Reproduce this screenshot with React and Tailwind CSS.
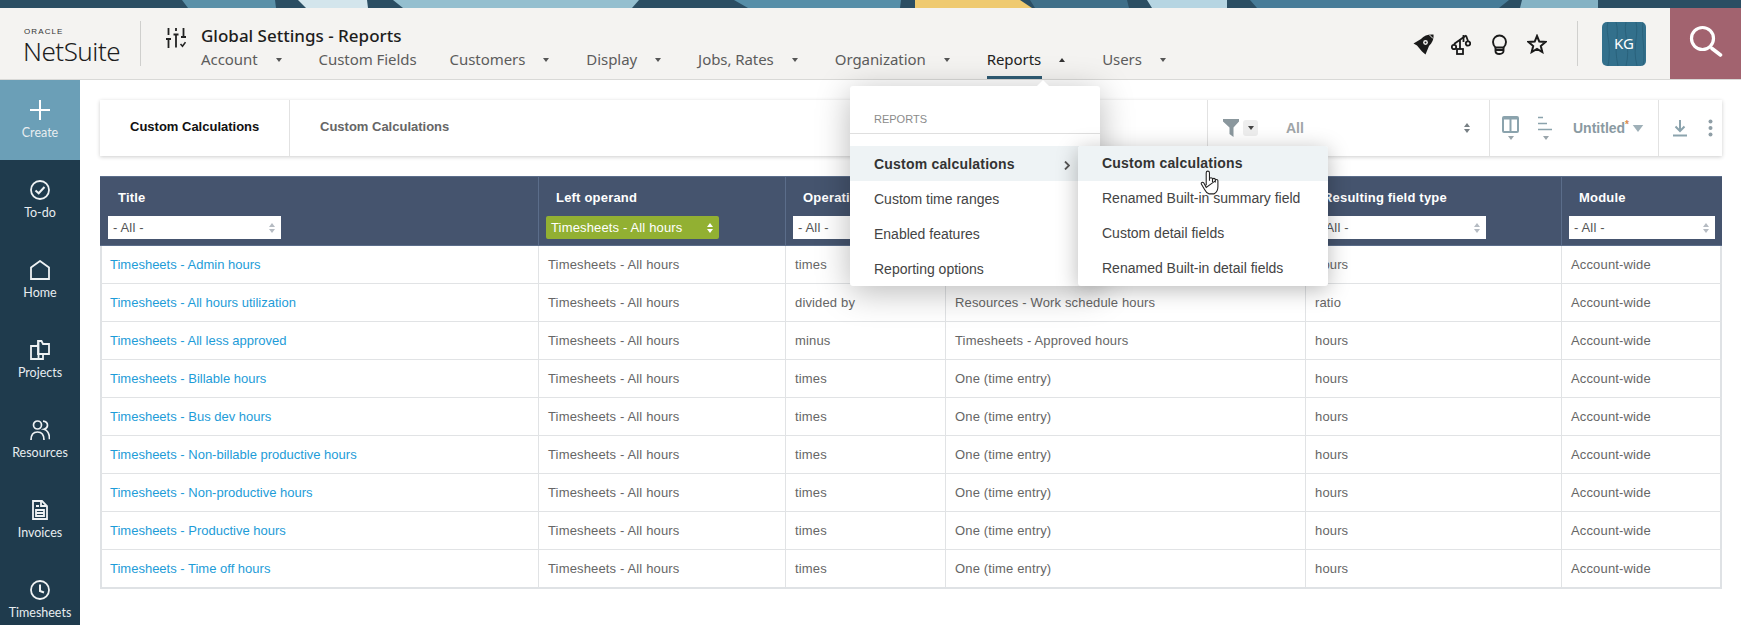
const navItems = [
  { label: "Account", caret: true },
  { label: "Custom Fields" },
  { label: "Customers", caret: true },
  { label: "Display", caret: true },
  { label: "Jobs, Rates", caret: true },
  { label: "Organization", caret: true },
  { label: "Reports", caret: true, active: true },
  { label: "Users", caret: true },
];

const rows = [
  ["Timesheets - Admin hours", "times", "Timesheets - Admin hours", "hours"],
  ["Timesheets - All hours utilization", "divided by", "Resources - Work schedule hours", "ratio"],
  ["Timesheets - All less approved", "minus", "Timesheets - Approved hours", "hours"],
  ["Timesheets - Billable hours", "times", "One (time entry)", "hours"],
  ["Timesheets - Bus dev hours", "times", "One (time entry)", "hours"],
  ["Timesheets - Non-billable productive hours", "times", "One (time entry)", "hours"],
  ["Timesheets - Non-productive hours", "times", "One (time entry)", "hours"],
  ["Timesheets - Productive hours", "times", "One (time entry)", "hours"],
  ["Timesheets - Time off hours", "times", "One (time entry)", "hours"],
];

const gridCols = "grid grid-cols-[438px_247px_160px_360px_256px_161px]";

function TopBand() {
  return (
    <svg className="block h-2 w-full shrink-0" viewBox="0 0 1741 8" preserveAspectRatio="none">
      <rect width="1741" height="8" fill="#2b4e63" />
      <polygon points="182,0 275,0 276,8 188,8" fill="#5a90a8" />
      <polygon points="298,0 367,0 368,8 306,8" fill="#d3e5ec" />
      <polygon points="393,0 639,0 632,8 403,8" fill="#94bfcf" />
      <polygon points="734,0 901,0 900,8 748,8" fill="#568ea8" />
      <polygon points="915,0 1020,0 1032,8 915,8" fill="#efca70" />
      <polygon points="1030,0 1127,0 1129,8 1035,8" fill="#3f6f89" />
      <polygon points="1147,0 1227,0 1227,8 1152,8" fill="#b6d5e2" />
      <polygon points="1250,0 1509,0 1499,8 1257,8" fill="#477c98" />
      <polygon points="1522,0 1598,0 1598,8 1520,8" fill="#84b2c4" />
    </svg>
  );
}

function Caret({ up, className = "" }) {
  return (
    <svg className={className} width="6" height="4" viewBox="0 0 6 4">
      <polygon points={up ? "0,4 6,4 3,0" : "0,0 6,0 3,4"} fill="currentColor" />
    </svg>
  );
}

function SettingsIcon() {
  return (
    <svg width="20" height="20" viewBox="0 0 20 20" fill="none" stroke="#222" strokeWidth="1.8">
      <path d="M2.5 0v7M0 11h5M2.5 11v9" />
      <path d="M10 0v3M7.5 6.5h5M10 6.5v13" />
      <path d="M17.5 0v9M15 9h5" />
      <path d="M14.5 16l2 2.2 3-4" strokeWidth="1.6" />
    </svg>
  );
}

function RocketIcon() {
  return (
    <svg width="21" height="21" viewBox="0 0 21 21">
      <path d="M20.5.5c-5-.4-9.500 1-12.500 4.500L.5 9.500l3.500 2 5 6 3.500 3 3.500-8.500c3-3 5-6.500 4.500-11.500z" fill="#1a1a1a" />
      <circle cx="12.500" cy="8.500" r="2.400" fill="#f4f3f1" />
      <circle cx="12.500" cy="8.500" r="1" fill="#1a1a1a" />
      <path d="M16.500 1l3.500 3.500" stroke="#f4f3f1" strokeWidth="1" />
    </svg>
  );
}

function ScalesIcon() {
  return (
    <svg width="20" height="21" viewBox="0 0 20 21" fill="none" stroke="#1a1a1a" strokeWidth="1.800">
      <path d="M9 15V5M3 10L15 1.500" />
      <circle cx="3" cy="13" r="2.200" />
      <circle cx="17" cy="9.500" r="2.200" />
      <path d="M3 10.500v-.5M15 1.500l2 5.500M12.500 1v7" />
      <rect x="6" y="15" width="6" height="5" />
    </svg>
  );
}

function BulbIcon() {
  return (
    <svg width="15" height="21" viewBox="0 0 15 21" fill="none" stroke="#1a1a1a" strokeWidth="1.900">
      <path d="M3.500 13.500C2 12 1 10.500 1 8a6.500 6.500 0 0 1 13 0c0 2.500-1 4-2.500 5.500z" />
      <path d="M3.500 13.500v3.500c0 1.500 1.500 3 4 3s4-1.500 4-3v-3.500M3.500 16h8" />
    </svg>
  );
}

function StarIcon() {
  return (
    <svg width="20" height="20" viewBox="0 0 20 20" fill="none" stroke="#1a1a1a" strokeWidth="2">
      <polygon points="10,2 12.300,7.600 18.500,8 13.800,12 15.300,18 10,14.800 4.700,18 6.200,12 1.500,8 7.700,7.600" />
    </svg>
  );
}

function Header() {
  return (
    <header className="flex h-[72px] shrink-0 items-stretch border-b border-[#d9d9d7] bg-[#f4f3f1]">
      <div className="my-auto ml-[23px] flex h-[45px] w-[118px] flex-col border-r border-[#cfcfcd]">
        <span className="ml-[1px] mt-[7px] text-[8px] leading-[7px] tracking-[1.1px] text-[#333] font-['Liberation_Sans',sans-serif]">ORACLE</span>
        <span className="mt-[1px] text-[26px] leading-[30px] tracking-[-0.5px] text-[#1d1d1d] font-['Noto_Sans',sans-serif] font-light">NetSuite</span>
      </div>
      <div className="ml-[25px] mt-5">
        <SettingsIcon />
      </div>
      <div className="ml-[15px] flex flex-col font-['Noto_Sans',sans-serif]">
        <div className="mt-[15px] text-[17px] leading-[26px] font-medium text-[#1d1d1d]">Global Settings - Reports</div>
        <nav className="mt-[-1px] flex gap-[33px] tracking-[-0.06px]">
          {navItems.map((item) => (
            <div key={item.label} className="relative flex h-[31px] items-center pb-[9px]">
              <span className={item.active ? "text-[15px] text-[#222]" : "text-[15px] text-[#5c5c5c]"}>{item.label}</span>
              {item.caret && (
                <span className="ml-[18px] mt-[2px] w-[10px]">
                  <Caret up={item.active} className={item.active ? "text-[#333]" : "text-[#555]"} />
                </span>
              )}
              {item.active && <span className="absolute bottom-0 left-0 h-[3px] w-[55px] bg-[#2e5b73]" />}
            </div>
          ))}
        </nav>
      </div>
      <div className="ml-auto flex items-center">
        <div className="mt-[2px] flex">
          <span className="flex w-[38px] justify-center"><RocketIcon /></span>
          <span className="flex w-[38px] justify-center"><ScalesIcon /></span>
          <span className="flex w-[38px] justify-center"><BulbIcon /></span>
          <span className="flex w-[38px] justify-center"><StarIcon /></span>
        </div>
        <div className="ml-[21px] h-[45px] w-px bg-[#d0d0ce]" />
        <div className="relative ml-[24px] flex h-[44px] w-[44px] items-center justify-center overflow-hidden rounded-[5px] bg-[#33708c] text-[15px] text-white font-['Noto_Sans',sans-serif]">
          <svg className="absolute inset-0" width="44" height="44" viewBox="0 0 44 44" fill="none" stroke="#2a627c" strokeWidth="1">
            <path d="M6 0c-3 12 4 20 0 44M14 0c4 14-3 22 2 44M24 0c-3 12 5 24 0 44M34 0c3 14-4 24 1 44M41 0c-2 16 3 28 0 44" />
          </svg>
          <span className="relative">KG</span>
        </div>
        <div className="ml-[24px] flex h-full w-[71px] items-center justify-center bg-[#a2636f]">
          <svg className="mb-[4px]" width="34" height="34" viewBox="0 0 34 34" fill="none" stroke="#fff" strokeWidth="3.200" strokeLinecap="round">
            <circle cx="13.500" cy="13.500" r="11" />
            <path d="M23 23.500l8.500 6.500" strokeWidth="3.600" />
          </svg>
        </div>
      </div>
    </header>
  );
}

function NavIcon({ name }) {
  if (name === "Create") {
    return (
      <svg width="20" height="20" viewBox="0 0 20 20" stroke="#fff" strokeWidth="2">
        <path d="M10 0v20M0 10h20" />
      </svg>
    );
  }
  if (name === "To-do") {
    return (
      <svg width="20" height="20" viewBox="0 0 20 20" fill="none" stroke="#eef2f4" strokeWidth="1.800">
        <circle cx="10" cy="10" r="9" />
        <path d="M5.500 10.500l3.200 2.800 5.800-6.300" strokeWidth="2" />
      </svg>
    );
  }
  if (name === "Home") {
    return (
      <svg width="20" height="20" viewBox="0 0 20 20" fill="none" stroke="#eef2f4" strokeWidth="1.800">
        <path d="M1 19V7.500L10 1l9 6.500V19z" />
      </svg>
    );
  }
  if (name === "Projects") {
    return (
      <svg width="20" height="20" viewBox="0 0 20 20" fill="none" stroke="#eef2f4" strokeWidth="1.800">
        <path d="M1 6h6l1.500-2V19H1z M1 19h12v-5" />
        <path d="M8 14V1h3.500l1.500 3h6v10z" />
      </svg>
    );
  }
  if (name === "Resources") {
    return (
      <svg width="20" height="20" viewBox="0 0 20 20" fill="none" stroke="#eef2f4" strokeWidth="1.700">
        <circle cx="7.500" cy="5" r="4" />
        <path d="M1 20c0-5 2.500-8 6.500-8s6.500 3 6.500 8" />
        <path d="M13 1.200c3 .3 4.500 2 4.500 4s-1.500 3.500-3.500 4c3.500 1 5.500 4.500 5.500 10" />
      </svg>
    );
  }
  if (name === "Invoices") {
    return (
      <svg width="20" height="20" viewBox="0 0 20 20" fill="none" stroke="#eef2f4" strokeWidth="1.800">
        <path d="M3 1h9l5 5v13H3z" />
        <path d="M11 1v5h6M6 6h3M6 10h8v6H6zM6 13h8" />
      </svg>
    );
  }
  return (
    <svg width="20" height="20" viewBox="0 0 20 20" fill="none" stroke="#eef2f4" strokeWidth="1.800">
      <circle cx="10" cy="10" r="9" />
      <path d="M10 4.500V11l4 1.500" strokeWidth="2" />
    </svg>
  );
}

function SideItem({ name, active }) {
  return (
    <div className={active ? "flex h-20 shrink-0 flex-col items-center bg-[#6b9fb7] pt-[20px]" : "flex h-20 shrink-0 flex-col items-center pt-[20px]"}>
      <NavIcon name={name} />
      <span className="mt-[5px] text-[12.5px] leading-4 text-[#e8edf0] font-['Lato',sans-serif]">{name}</span>
    </div>
  );
}

function UpDown({ className = "" }) {
  return (
    <svg className={className} width="6" height="10" viewBox="0 0 6 10">
      <polygon points="0,4 6,4 3,0" fill="currentColor" />
      <polygon points="0,6 6,6 3,10" fill="currentColor" />
    </svg>
  );
}

function Toolbar() {
  return (
    <div className="flex h-[56px] items-stretch bg-white shadow-[0_1px_4px_rgba(0,0,0,0.2)] font-['Liberation_Sans',sans-serif]">
      <div className="flex w-[190px] items-center border-r border-[#e2e2e2] pb-[2px] pl-[30px] text-[13px] font-bold text-[#111]">Custom Calculations</div>
      <div className="flex items-center pb-[2px] pl-[30px] text-[13px] font-bold text-[#666]">Custom Calculations</div>
      <div className="ml-auto flex w-[515px] items-stretch text-[#8a9ba5]">
        <div className="flex w-[282px] items-center border-l border-[#e2e2e2] pl-[15px]">
          <svg width="16" height="18" viewBox="0 0 16 18">
            <path d="M0 0h16v2.500L10.500 8.500V18L6.500 15V8.500L0 2.500z" fill="#8a979d" />
          </svg>
          <span className="ml-[4px] flex h-[16px] w-[15px] items-center justify-center rounded-[3px] bg-[#eeeeee] text-[#444]">
            <Caret />
          </span>
          <span className="ml-[28px] text-[14px] font-bold text-[#a0a5a8]">All</span>
          <UpDown className="ml-auto mr-[19px] text-[#777f84]" />
        </div>
        <div className="flex w-[169px] items-center border-l border-[#e2e2e2] pl-[12px]">
          <div className="flex flex-col items-center">
            <svg width="17" height="17" viewBox="0 0 17 17" fill="none" stroke="#8ba3ad" strokeWidth="2">
              <rect x="1" y="1" width="15" height="15" rx="1" />
              <path d="M8.500 1v15M1 2.500h15" />
            </svg>
            <Caret className="mt-[3px] text-[#9aa5ab]" />
          </div>
          <div className="ml-[19px] flex flex-col items-center">
            <svg width="15" height="17" viewBox="0 0 15 17" fill="none" stroke="#8ba3ad" strokeWidth="1.500">
              <path d="M0 1.500h5M0 7.500h9M0 13.500h14" />
            </svg>
            <Caret className="mt-[3px] text-[#9aa5ab]" />
          </div>
          <span className="ml-[20px] mt-[1px] text-[14px] font-bold text-[#8a9aa2]">
            Untitled<sup className="text-[10px] text-[#d98a4a]">*</sup>
          </span>
          <Caret className="ml-[3px] h-[7px] w-[12px] text-[#9fb0b8]" />
        </div>
        <div className="flex flex-1 items-center border-l border-[#e2e2e2] pl-[14px]">
          <svg width="14" height="17" viewBox="0 0 14 17" fill="none" stroke="#8ba3ad" strokeWidth="2">
            <path d="M7 0v10M2.500 6.500L7 11l4.500-4.500M0 15.500h14" />
          </svg>
          <svg className="ml-[21px]" width="5" height="18" viewBox="0 0 5 18" fill="#8f9ea6">
            <circle cx="2.500" cy="2.500" r="2" />
            <circle cx="2.500" cy="9" r="2" />
            <circle cx="2.500" cy="15.500" r="2" />
          </svg>
        </div>
      </div>
    </div>
  );
}

function FilterSelect({ label = "- All -", green, width = "w-[173px]" }) {
  const color = green ? "rounded-[2px] bg-[#92b032] text-white" : "bg-white text-[#555]";
  return (
    <div className={`flex h-[23px] items-center justify-between px-[5px] text-[13px] tracking-[0.15px] ${width} ${color}`}>
      <span>{label}</span>
      <UpDown className={green ? "mr-[1px] text-white" : "mr-[1px] text-[#b5bbc2]"} />
    </div>
  );
}

function HeadCell({ title, label, green, width }) {
  return (
    <div className="flex flex-col border-l border-[#5b6d8a] pl-[7px] first:border-l-0 first:pl-[8px]">
      <div className="h-[39px] pl-[10px] pt-[13px] text-[13px] font-bold leading-[16px] tracking-[0.2px] text-white">{title}</div>
      <FilterSelect label={label} green={green} width={width} />
    </div>
  );
}

function ReportTable() {
  return (
    <div className="mt-[20px] w-[1622px] border-x-2 border-b-2 border-[#dfe2e5] text-[13px] font-['Liberation_Sans',sans-serif]">
      <div className={`${gridCols} -mx-[2px] h-[70px] border-y border-[#5b6d8a] bg-[#45546e]`}>
        <HeadCell title="Title" />
        <HeadCell title="Left operand" label="Timesheets - All hours" green />
        <HeadCell title="Operation" />
        <HeadCell title="Right operand" />
        <HeadCell title="Resulting field type" />
        <HeadCell title="Module" width="w-[146px]" />
      </div>
      {rows.map((row) => (
        <div key={row[0]} className={`${gridCols} -mx-[2px] h-[38px] items-stretch border-b border-[#e1e3e5] tracking-[0.15px] text-[#666] last:h-[37px] last:border-b-0`}>
          <div className="flex items-center pl-[10px] tracking-normal text-[#1d9cd8]">{row[0]}</div>
          <div className="flex items-center border-l border-[#e1e3e5] pl-[9px]">Timesheets - All hours</div>
          <div className="flex items-center border-l border-[#e1e3e5] pl-[9px]">{row[1]}</div>
          <div className="flex items-center border-l border-[#e1e3e5] pl-[9px]">{row[2]}</div>
          <div className="flex items-center border-l border-[#e1e3e5] pl-[9px]">{row[3]}</div>
          <div className="flex items-center border-l border-[#e1e3e5] pl-[9px]">Account-wide</div>
        </div>
      ))}
    </div>
  );
}

function ReportsMenu() {
  const items = ["Custom time ranges", "Enabled features", "Reporting options"];
  const subItems = ["Renamed Built-in summary field", "Custom detail fields", "Renamed Built-in detail fields"];
  return (
    <div className="absolute left-[850px] top-[86px] h-[200px] w-[250px] rounded-[3px] bg-white text-[14px] text-[#444] shadow-[0_6px_34px_rgba(0,0,0,0.28)] font-['Liberation_Sans',sans-serif]">
      <svg className="absolute -top-[6px] left-[187px]" width="12" height="6" viewBox="0 0 12 6">
        <polygon points="0,6 12,6 6,0" fill="#fff" />
      </svg>
      <div className="h-[48px] border-b border-[#dfdfdf] pl-[24px] pt-[26px] text-[11px] leading-[14px] text-[#8b8b8b]">REPORTS</div>
      <div className="mt-[12px] flex h-[35px] items-center bg-[#eef3f5] pl-[24px] pr-[30px] pt-[2px] font-bold tracking-[0.2px] text-[#333]">
        Custom calculations
        <svg className="ml-auto mt-[2px]" width="6" height="9" viewBox="0 0 6 9" fill="none" stroke="#555" strokeWidth="1.800">
          <path d="M1 .5l4 4-4 4" />
        </svg>
      </div>
      {items.map((item) => (
        <div key={item} className="flex h-[35px] items-center pl-[24px] pt-[2px]">{item}</div>
      ))}

      <div className="absolute left-[228px] top-[60px] w-[250px] overflow-hidden rounded-[3px] bg-white shadow-[0_4px_22px_rgba(0,0,0,0.28)]">
        <div className="flex h-[35px] items-center bg-[#eef3f5] pl-[24px] pb-[1px] font-bold tracking-[0.2px] text-[#333]">Custom calculations</div>
        {subItems.map((item) => (
          <div key={item} className="flex h-[35px] items-center pl-[24px]">{item}</div>
        ))}
      </div>

      <svg className="absolute left-[350px] top-[84px]" width="20" height="26" viewBox="0 0 18 24" fill="#fff" stroke="#222" strokeWidth="1">
        <path d="M5.500 14V2.500a1.500 1.500 0 0 1 3 0V10m0-1.500a1.400 1.400 0 0 1 2.800 0V11m0-2a1.300 1.300 0 0 1 2.600 0v2.500m0-1.500a1.200 1.200 0 0 1 2.400 0v5.500c0 3-1.500 5.500-3.500 6.500H8c-2-.8-3-2-4-4l-3-5c-.6-1.200 1.200-2.400 2.200-1.200L5.500 16z" />
      </svg>
    </div>
  );
}

export default function App() {
  return (
    <div className="relative flex h-[625px] w-full flex-col overflow-hidden bg-white">
      <TopBand />
      <Header />
      <div className="flex min-h-0 flex-1">
        <aside className="flex w-20 shrink-0 flex-col overflow-hidden bg-[#1f3b4d]">
          <SideItem name="Create" active />
          <SideItem name="To-do" />
          <SideItem name="Home" />
          <SideItem name="Projects" />
          <SideItem name="Resources" />
          <SideItem name="Invoices" />
          <SideItem name="Timesheets" />
        </aside>
        <main className="min-w-0 flex-1 pl-[20px] pr-[19px] pt-[20px]">
          <Toolbar />
          <ReportTable />
        </main>
      </div>
      <ReportsMenu />
    </div>
  );
}
